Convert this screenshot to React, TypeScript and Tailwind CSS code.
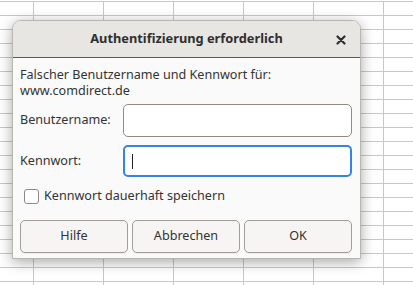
import React from "react";

const cols = [34, 70, 70, 70, 70, 70, 70];
const rows = Array.from({ length: 21 });

function SheetBackground() {
  return (
    <div className="flex flex-col">
      <div className="h-[2px] border-b border-[#c8c8c8]" />
      {rows.map((_, r) => (
        <div key={r} className="flex h-[14px]">
          {cols.map((w, c) => (
            <div
              key={c}
              className="h-[14px] shrink-0 border-r border-b border-[#c8c8c8]"
              style={{ width: w }}
            />
          ))}
        </div>
      ))}
    </div>
  );
}

function CloseIcon() {
  return (
    <svg width="10" height="10" viewBox="0 0 10 10" className="text-[#2e2e2e]">
      <path d="M1.5 1.5 L8.5 8.5 M8.5 1.5 L1.5 8.5" stroke="currentColor" strokeWidth="2.2" strokeLinecap="round" />
    </svg>
  );
}

function Button({ label }: { label: string }) {
  return (
    <button className="flex h-[33px] flex-1 items-center justify-center rounded-[5px] border border-[#a39d96] bg-[#f6f5f4] text-[12.6px] text-[#333] shadow-[0_1px_0_rgba(0,0,0,0.06)]">
      {label}
    </button>
  );
}

export default function App() {
  return (
    <div
      className="relative h-[285px] w-[413px] overflow-hidden bg-white"
      style={{ fontFamily: '"Noto Sans", "DejaVu Sans", sans-serif' }}
    >
      <SheetBackground />

      {/* Dialog */}
      <div className="absolute left-[12px] top-[20px] flex h-[239px] w-[349px] flex-col overflow-hidden rounded-t-[9px] border border-[#b9b6b1] bg-[#fafafa] shadow-[0_3px_14px_rgba(0,0,0,0.35)]">
        {/* Title bar */}
        <div className="relative flex h-[37px] shrink-0 items-center justify-center border-b border-[#5c5852] bg-[#e8e6e3]">
          <span className="text-[12.8px] font-bold text-[#2f2f2f]">Authentifizierung erforderlich</span>
          <div className="absolute right-[14px] top-[14px]">
            <CloseIcon />
          </div>
        </div>

        {/* Body */}
        <div className="flex flex-1 flex-col px-[7px] pt-[9px] text-[12.6px] text-[#333]">
          <div className="leading-[16px]">
            <div>Falscher Benutzername und Kennwort für:</div>
            <div>www.comdirect.de</div>
          </div>

          <div className="mt-[5px] flex items-center">
            <label className="w-[103px] shrink-0">Benutzername:</label>
            <div className="h-[33px] w-[229px] rounded-[5px] border border-[#918b84] bg-white" />
          </div>

          <div className="mt-[8px] flex items-center">
            <label className="w-[103px] shrink-0">Kennwort:</label>
            <div className="flex h-[32px] w-[229px] items-center rounded-[5px] border-2 border-[#3584e4] bg-white pl-[7px]">
              <div className="h-[15px] w-px bg-[#222]" />
            </div>
          </div>

          <div className="mt-[10px] flex items-center gap-[5px] pl-[4px]">
            <div className="h-[15px] w-[15px] rounded-[3px] border border-[#8d8882] bg-white" />
            <span>Kennwort dauerhaft speichern</span>
          </div>

          <div className="mt-[14px] flex gap-[4px] pr-[1px]">
            <Button label="Hilfe" />
            <Button label="Abbrechen" />
            <Button label="OK" />
          </div>
        </div>
      </div>
    </div>
  );
}
